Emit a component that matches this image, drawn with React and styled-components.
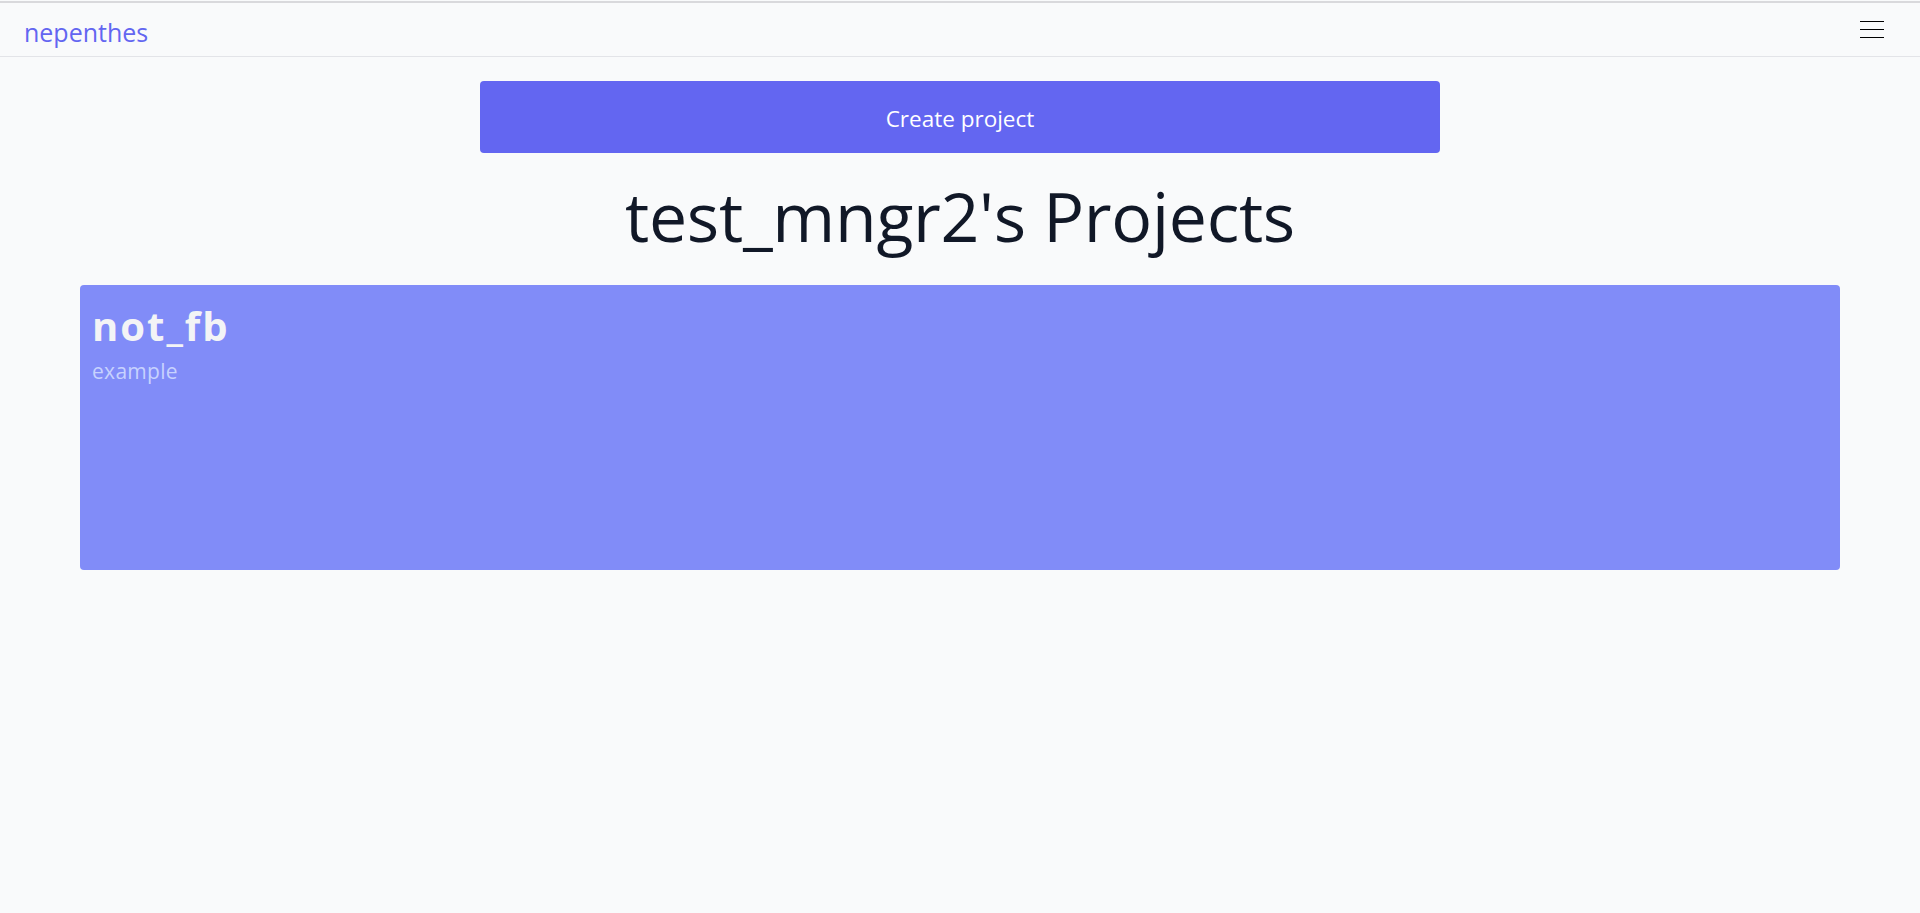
import React from "react";
import styled, { createGlobalStyle } from "styled-components";

const GlobalStyle = createGlobalStyle`
  html, body {
    margin: 0;
    padding: 0;
    background: #f9fafb;
    font-family: "Open Sans", "Noto Sans", sans-serif;
  }
  * { box-sizing: border-box; }
`;

const Page = styled.div`
  min-height: 100vh;
  padding-top: 1px;
  background: #f9fafb;
`;

const NavBar = styled.nav`
  height: 56px;
  border-top: 2px solid #d9d9dc;
  border-bottom: 1px solid #e3e4e8;
  display: flex;
  align-items: center;
  justify-content: space-between;
  padding: 0 36px 0 24px;
`;

const Brand = styled.a`
  font-size: 25px;
  color: #6366f1;
  text-decoration: none;
  line-height: 1;
  margin-top: 5px;
`;

const MenuButton = styled.button`
  background: none;
  border: 0;
  padding: 0;
  width: 24px;
  height: 17px;
  display: flex;
  flex-direction: column;
  justify-content: space-between;
  cursor: pointer;
`;

const MenuLine = styled.span`
  display: block;
  height: 1px;
  width: 24px;
  background: #000;
`;

const Main = styled.main`
  width: calc(100% * 11 / 12);
  margin: 0 auto;
  padding-top: 24px;
  display: flex;
  flex-direction: column;
  align-items: center;
`;

const CreateButton = styled.button`
  width: 960px;
  height: 72px;
  border: 0;
  border-radius: 4px;
  padding: 3px 0 0;
  background: #6366f1;
  color: #ffffff;
  font-family: inherit;
  font-size: 22.5px;
  cursor: pointer;
`;

const Heading = styled.h1`
  margin: 27px 0 33px;
  font-size: 68px;
  line-height: 72px;
  letter-spacing: -0.3px;
  font-weight: 400;
  color: #111827;
  text-align: center;
`;

const ProjectCard = styled.div`
  width: 100%;
  height: 285px;
  background: #818cf8;
  border-radius: 4px;
  padding: 21px 12px 12px;
`;

const ProjectName = styled.h2`
  margin: 0;
  font-size: 40px;
  line-height: 40px;
  letter-spacing: 2px;
  font-weight: 700;
  color: #f3f4f6;
`;

const ProjectDesc = styled.p`
  margin: 11px 0 0;
  font-size: 21px;
  line-height: 28px;
  letter-spacing: 0.3px;
  color: #c7d2fe;
`;

export default function App() {
  return (
    <>
      <GlobalStyle />
      <Page>
        <NavBar>
          <Brand href="#">nepenthes</Brand>
          <MenuButton aria-label="menu">
            <MenuLine />
            <MenuLine />
            <MenuLine />
          </MenuButton>
        </NavBar>
        <Main>
          <CreateButton>Create project</CreateButton>
          <Heading>test_mngr2's Projects</Heading>
          <ProjectCard>
            <ProjectName>not_fb</ProjectName>
            <ProjectDesc>example</ProjectDesc>
          </ProjectCard>
        </Main>
      </Page>
    </>
  );
}
